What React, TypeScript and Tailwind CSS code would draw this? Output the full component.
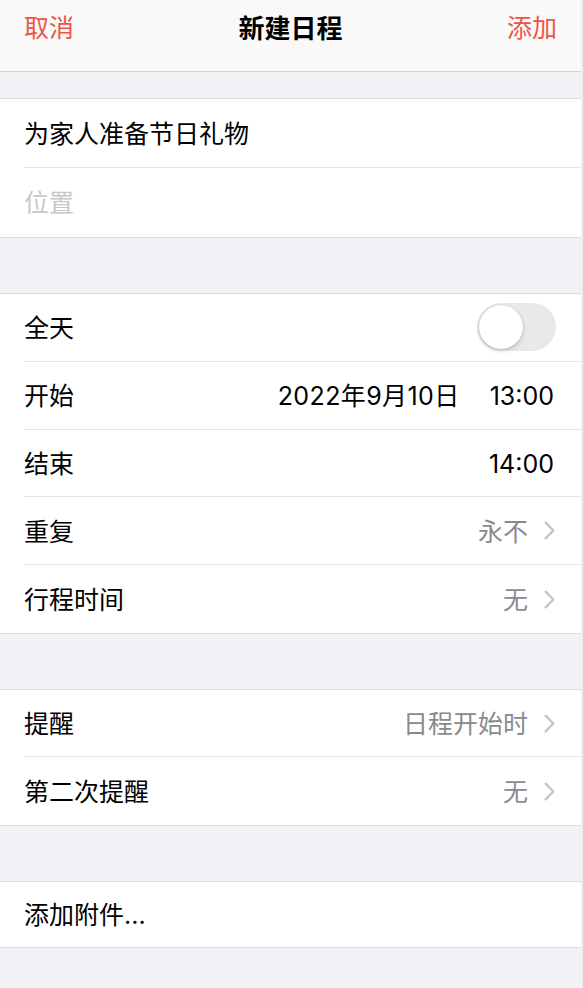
const font = { fontFamily: 'Inter, "Noto Sans CJK SC", sans-serif' };

function Row({ label, children, last, h = 'h-[68px]' }: { label: string; children?: React.ReactNode; last?: boolean; h?: string }) {
  return (
    <div className="pl-6">
      <div className={`${h} flex items-center justify-between pr-[27px] pt-[3px] ${last ? '' : 'border-b border-[#e3e3e7]'}`}>
        <span className="text-[25px] text-black">{label}</span>
        {children}
      </div>
    </div>
  );
}

function Chevron() {
  return (
    <svg width="11" height="19" viewBox="0 0 11 19" fill="none" className="-mr-px -mt-[3px]">
      <path d="M1.6 1.6 L9.3 9.5 L1.6 17.4" stroke="#c4c4c8" strokeWidth="2.3" strokeLinecap="round" strokeLinejoin="round" />
    </svg>
  );
}

function Value({ text }: { text: string }) {
  return (
    <div className="flex items-center gap-[16px]">
      <span className="text-[25px] text-[#8a8a8e]">{text}</span>
      <Chevron />
    </div>
  );
}

function Section({ children }: { children: React.ReactNode }) {
  return <div className="bg-white border-y border-[#dcdce0]">{children}</div>;
}

export default function App() {
  return (
    <div className="w-[583px] h-[988px] flex overflow-hidden" style={font}>
      <div className="w-[581px] bg-[#f1f1f6] flex flex-col">
        <div className="h-[72px] shrink-0 bg-[#f9f9fa] border-b border-[#d4d4d8] flex items-center justify-between px-6 pb-[14px]">
          <span className="text-[25px] text-[#ef5443]">取消</span>
          <span className="text-[26px] font-bold text-black">新建日程</span>
          <span className="text-[25px] text-[#ef5443]">添加</span>
        </div>

        <div className="h-[26px] shrink-0" />
        <Section>
          <Row label="为家人准备节日礼物" h="h-[69px]" />
          <div className="pl-6">
            <div className="h-[69px] flex items-center pt-[3px]">
              <span className="text-[25px] text-[#c7c7cc]">位置</span>
            </div>
          </div>
        </Section>

        <div className="h-[55px] shrink-0" />
        <Section>
          <Row label="全天" h="h-[67.8px]">
            <div className="w-[79px] h-[48px] rounded-full bg-[#e9e9eb] p-[2px] -mr-[2px] -mt-[3px] flex items-center">
              <div className="w-[44px] h-[44px] rounded-full bg-white shadow-[0_2px_4px_rgba(0,0,0,0.18),0_0_1px_rgba(0,0,0,0.2)]" />
            </div>
          </Row>
          <Row label="开始" h="h-[67.8px]">
            <div className="flex items-center gap-[30px] text-[25px] text-black">
              <span className="tracking-[0.4px]">2022年9月10日</span>
              <span>13:00</span>
            </div>
          </Row>
          <Row label="结束" h="h-[67.8px]">
            <span className="text-[25px] text-black">14:00</span>
          </Row>
          <Row label="重复" h="h-[67.8px]">
            <Value text="永不" />
          </Row>
          <Row label="行程时间" h="h-[67.8px]" last>
            <Value text="无" />
          </Row>
        </Section>

        <div className="h-[55px] shrink-0" />
        <Section>
          <Row label="提醒" h="h-[67.5px]">
            <Value text="日程开始时" />
          </Row>
          <Row label="第二次提醒" h="h-[67.5px]" last>
            <Value text="无" />
          </Row>
        </Section>

        <div className="h-[55px] shrink-0" />
        <Section>
          <Row label="添加附件..." h="h-[65px]" last />
        </Section>
      </div>
      <div className="w-[2px] bg-[#eeeeef]" />
    </div>
  );
}
